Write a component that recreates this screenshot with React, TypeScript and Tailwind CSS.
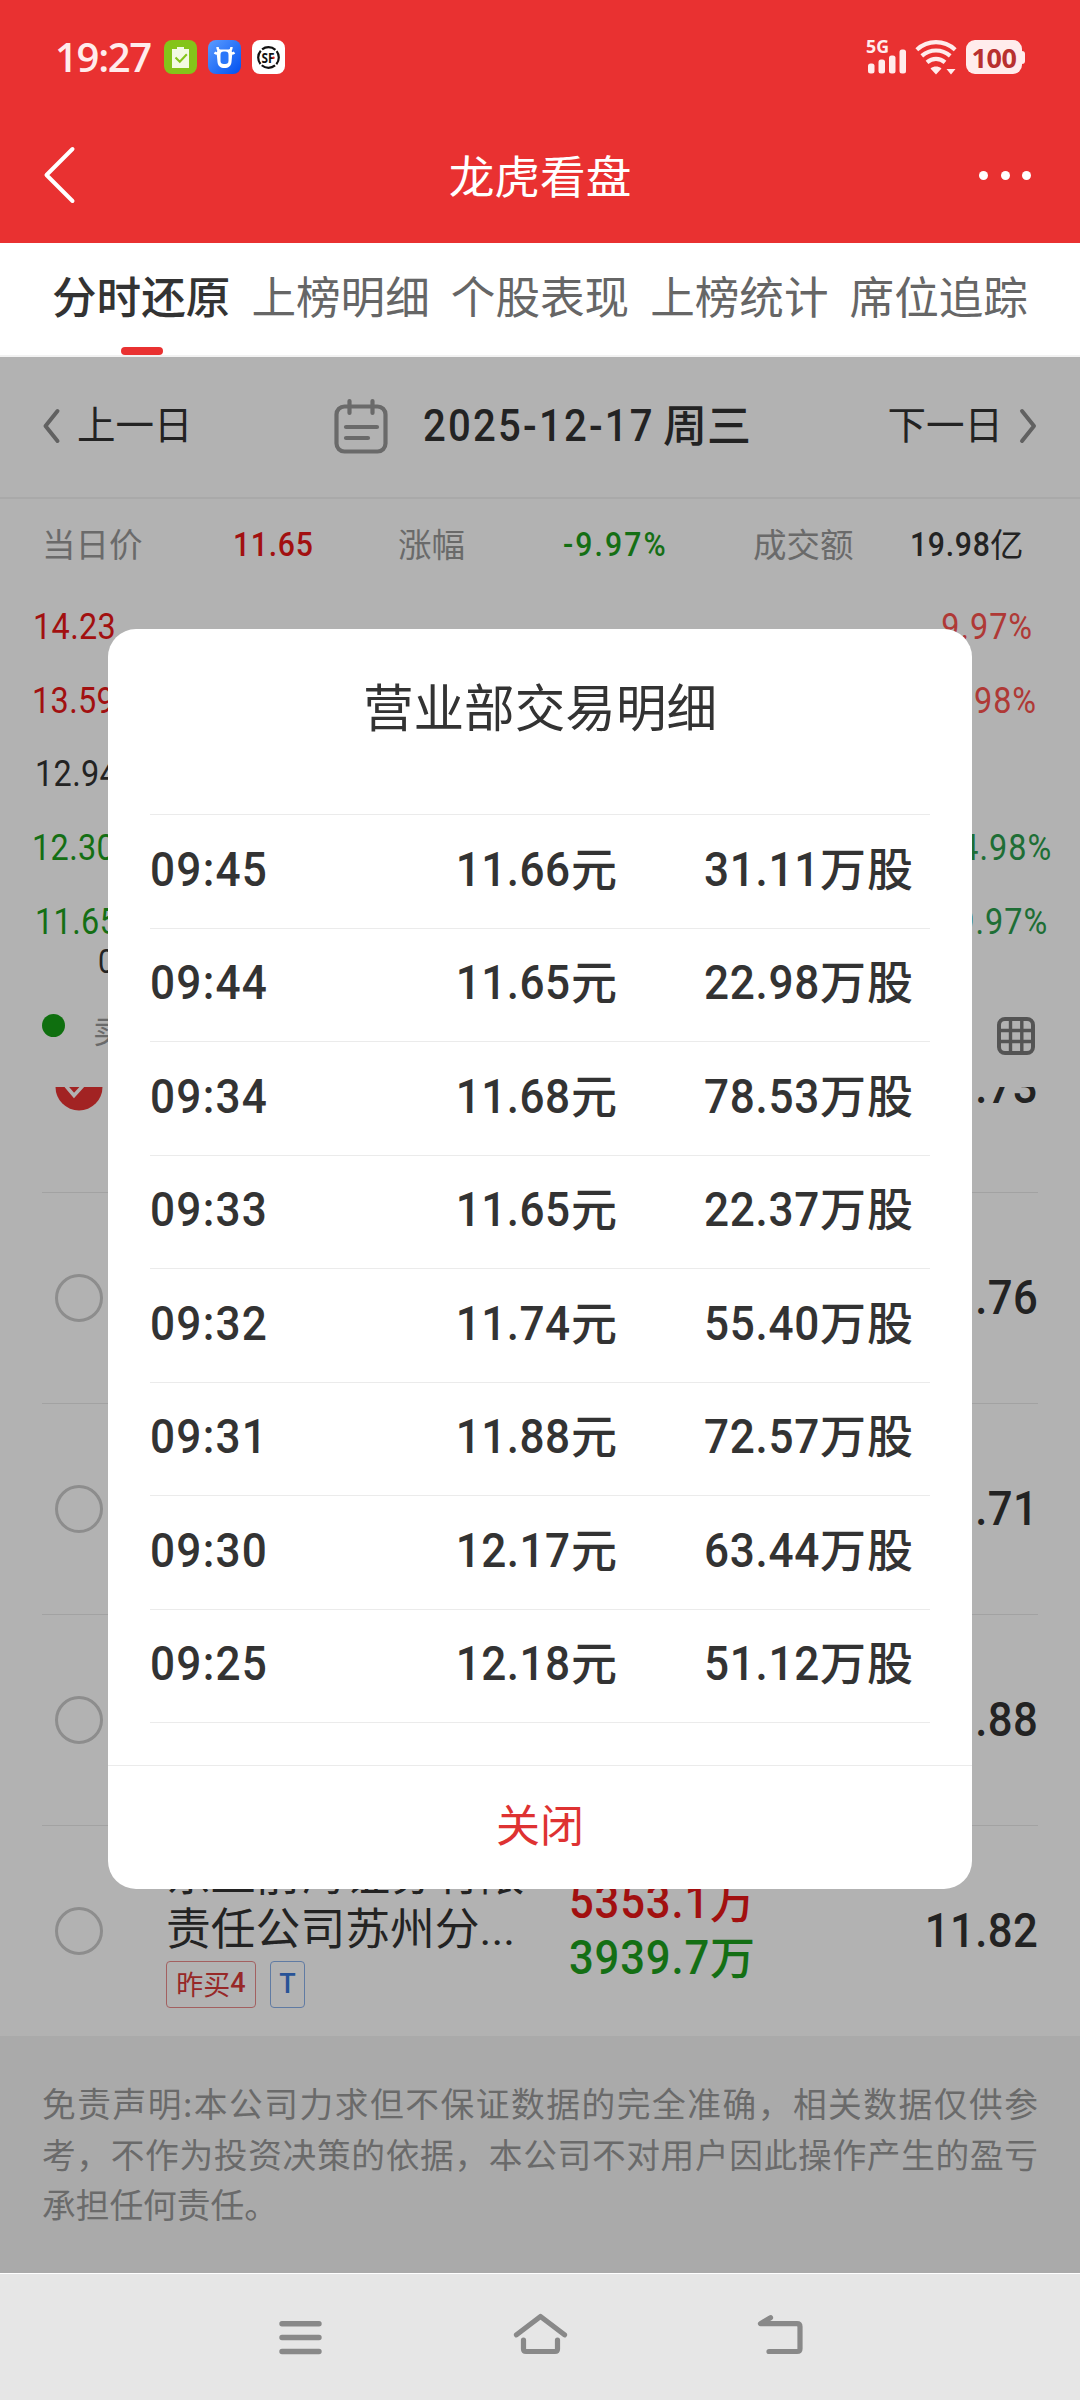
import React from "react";

interface Trade {
  time: string;
  price: string;
  volume: string;
}

interface AxisLabel {
  price: string;
  percent: string;
  left: string;
  right: string;
}

const tabs = ["分时还原", "上榜明细", "个股表现", "上榜统计", "席位追踪"];

const axis: AxisLabel[] = [
  { price: "14.23", percent: "9.97%", left: "pl-[33px] text-[#e81818]", right: "pr-[47px] text-[#fb524e]" },
  { price: "13.59", percent: "4.98%", left: "pl-[32px] text-[#e81818]", right: "pr-[43px] text-[#fb524e]" },
  { price: "12.94", percent: "", left: "pl-[35px] text-[#333]", right: "pr-[44px]" },
  { price: "12.30", percent: "-4.98%", left: "pl-[32px] text-[#1ea01e]", right: "pr-[28px] text-[#2c9e4c]" },
  { price: "11.65", percent: "-9.97%", left: "pl-[35px] text-[#1ea01e]", right: "pr-[32px] text-[#2c9e4c]" },
];

const trades: Trade[] = [
  { time: "09:45", price: "11.66", volume: "31.11" },
  { time: "09:44", price: "11.65", volume: "22.98" },
  { time: "09:34", price: "11.68", volume: "78.53" },
  { time: "09:33", price: "11.65", volume: "22.37" },
  { time: "09:32", price: "11.74", volume: "55.40" },
  { time: "09:31", price: "11.88", volume: "72.57" },
  { time: "09:30", price: "12.17", volume: "63.44" },
  { time: "09:25", price: "12.18", volume: "51.12" },
];

const seatPrices = ["11.73", "11.76", "11.71", "11.88"];

// narrow figures, squeezed towards the side they are aligned to
function Num({
  children,
  align = "left",
  className = "",
}: {
  children: React.ReactNode;
  align?: "left" | "right";
  className?: string;
}) {
  return (
    <span
      className={`inline-block scale-x-90 whitespace-nowrap font-['Roboto'] ${
        align === "right" ? "origin-right" : "origin-left"
      } ${className}`}
    >
      {children}
    </span>
  );
}

function StatusBar() {
  return (
    <div className="flex h-[114px] items-center pl-[55px] pr-[55px] text-[#ffecec]">
      <span className="w-[109px] font-['Open_Sans'] text-[40px] leading-none font-semibold tracking-[-1.300px]">19:27</span>
      <svg className="h-[34px] w-[33px]" viewBox="0 0 33 34">
        <rect width="33" height="34" rx="8" fill="#84c41a" />
        <path d="M8 9h5V7h7v2h5v19H8z" fill="#f3fae4" />
        <path d="M11.5 17.5l4.300 4.300 7-7.600" fill="none" stroke="#84c41a" strokeWidth="2" />
      </svg>
      <svg className="ml-[11px] h-[34px] w-[33px]" viewBox="0 0 33 34">
        <defs>
          <linearGradient id="ox" x1="0" y1="0" x2="1" y2="1">
            <stop offset="0" stopColor="#5b9cff" />
            <stop offset="1" stopColor="#0050f0" />
          </linearGradient>
        </defs>
        <rect width="33" height="34" rx="8" fill="url(#ox)" />
        <path d="M6.500 12.500c2 1.500 4 1.200 6-.5M26.500 12.500c-2 1.500-4 1.200-6-.5M9.500 7c0 2.500 1 4 3 4.500M23.500 7c0 2.500-1 4-3 4.500" fill="none" stroke="#fff" strokeWidth="2.400" />
        <path d="M12 9.500h9c2.500 0 3.500 2 3.200 5L23.500 22c-.5 4-3 6-7 6s-6.500-2-7-6l-.700-7.500c-.3-3 .7-5 3.200-5z" fill="#fff" />
        <rect x="12.500" y="11.500" width="8" height="12.500" rx="3.200" fill="#2b77fa" />
      </svg>
      <svg className="ml-[11px] h-[34px] w-[33px]" viewBox="0 0 33 34">
        <rect width="33" height="34" rx="8" fill="#fff" />
        <circle cx="16.500" cy="17.500" r="10.300" fill="none" stroke="#111" strokeWidth="2.200" strokeDasharray="14.400 1.780" strokeDashoffset="-9" />
        <text x="9.600" y="22.800" fontFamily="Open Sans" fontSize="14.500" fontWeight="700" fill="#111" textLength="13" lengthAdjust="spacingAndGlyphs">SF</text>
        <circle cx="21.500" cy="17.800" r="1.200" fill="#e02020" />
      </svg>

      <svg className="ml-auto h-[38px] w-[42px]" viewBox="0 0 42 38">
        <text x="0" y="14.500" fontFamily="Open Sans" fontSize="18" fontWeight="700" fill="#ffecec" textLength="23" lengthAdjust="spacingAndGlyphs">5G</text>
        <g fill="#ffecec">
          <rect x="2" y="25.500" width="6.500" height="10" rx="2.500" />
          <rect x="12.500" y="21.500" width="6.500" height="14" rx="2.500" />
          <rect x="23" y="17.500" width="6.500" height="18" rx="2.500" />
          <rect x="33.500" y="11.500" width="6.500" height="24" rx="2.500" />
        </g>
      </svg>
      <svg className="ml-[7px] h-[36px] w-[44px]" viewBox="0 0 44 36">
        <g fill="none" stroke="#ffecec" strokeWidth="4.200">
          <path d="M1.800 10.700C13 .7 29 .7 40.200 10.700" />
          <path d="M6.800 16.900c8.400-7.200 20-7.200 28.400 0" />
          <path d="M12 23.300c5.400-4.600 12.600-4.600 18 0" />
        </g>
        <path d="M15.500 29.500c3.500-2.600 7.500-2.600 11 0L21 35.500zM31.500 30h9L36 35.500z" fill="#ffecec" />
      </svg>
      <div className="ml-[7px] flex items-center">
        <div className="flex h-[34px] w-[56px] items-center justify-center rounded-[9px] bg-[#ffecec]">
          <span className="font-['Open_Sans'] text-[27px] leading-none font-bold tracking-[-0.500px] text-[#b8302f]">100</span>
        </div>
        <div className="h-[13px] w-[3px] rounded-r-[3px] bg-[#ffecec]" />
      </div>
    </div>
  );
}

function Header() {
  return (
    <header className="h-[243px] bg-[#e93131]">
      <StatusBar />
      <div className="flex h-[123px] items-center justify-between px-[42px] text-white">
        <svg className="h-[60px] w-[60px]" viewBox="0 0 60 60" fill="none" stroke="#fff" strokeWidth="4" strokeLinecap="round" strokeLinejoin="round">
          <path d="M30.500 3L4.500 29l26 26" />
        </svg>
        <h1 className="-mt-[2px] text-[45.700px] leading-none">龙虎看盘</h1>
        <div className="flex w-[60px] justify-end gap-[12.500px] pr-[7px]">
          {[0, 1, 2].map((dot) => (
            <span key={dot} className="size-[9px] shrink-0 rounded-full bg-white" />
          ))}
        </div>
      </div>
    </header>
  );
}

function TabBar() {
  return (
    <nav className="flex h-[114px] justify-between border-b-2 border-[#f2f2f2] bg-white px-[52px]">
      {tabs.map((tab, i) => (
        <div
          key={tab}
          className={`relative flex h-full items-center text-[44.600px] leading-none ${
            i === 0 ? "font-medium text-[#333]" : "text-[#666]"
          }`}
        >
          <span className="-mt-[8px]">{tab}</span>
          {i === 0 && <span className="absolute bottom-0 left-[69px] h-[8px] w-[42px] rounded-[4px] bg-[#e93131]" />}
        </div>
      ))}
    </nav>
  );
}

function DateBar() {
  return (
    <div className="flex h-[142px] items-center border-b-2 border-[#f2f2f2] px-[42px] pb-[3px] text-[38.500px] leading-none text-[#333]">
      <svg className="h-[36px] w-[20px]" viewBox="0 0 20 36" fill="none" stroke="#8c8c8c" strokeWidth="4" strokeLinecap="round" strokeLinejoin="round">
        <path d="M15.500 3L3.500 18l12 15" />
      </svg>
      <span className="-mt-[6px] ml-[15px] w-[256px]">上一日</span>
      <svg className="h-[56px] w-[56px]" viewBox="0 0 56 56" fill="none" stroke="#999" strokeWidth="4.200" strokeLinecap="round">
        <rect x="3.500" y="8.500" width="49" height="45" rx="8" />
        <path d="M16.500 3v12M39.500 3v12M13 29h31M13 40h22" />
      </svg>
      <div className="ml-[34px] flex items-center">
        <Num className="mt-[1px] w-[240px] text-[44.500px] font-medium tracking-[2.500px]">2025-12-17</Num>
        <span className="-mt-[5px] text-[44px] font-medium">周三</span>
      </div>
      <span className="-mt-[6px] ml-auto">下一日</span>
      <svg className="ml-[15px] h-[36px] w-[20px]" viewBox="0 0 20 36" fill="none" stroke="#8c8c8c" strokeWidth="4" strokeLinecap="round" strokeLinejoin="round">
        <path d="M4 3l12 15L4 33" />
      </svg>
    </div>
  );
}

function Stats() {
  return (
    <div className="flex h-[90px] items-center pl-[42px] text-[33.500px] leading-none text-[#999]">
      <span className="-mt-[2px] w-[191px]">当日价</span>
      <Num className="mt-[1px] w-[165px] font-medium tracking-[0.800px] text-[#e81818]">11.65</Num>
      <span className="-mt-[2px] w-[165px]">涨幅</span>
      <Num className="mt-[1px] w-[190px] font-medium tracking-[2.300px] text-[#1ea01e]">-9.97%</Num>
      <span className="-mt-[2px] w-[157px]">成交额</span>
      <Num className="mt-[1px] w-[80px] font-medium tracking-[0.800px] text-[#333]">19.98</Num>
      <span className="-mt-[2px] text-[#333]">亿</span>
    </div>
  );
}

function Chart() {
  return (
    <div className="h-[498px] pt-[1px] leading-none">
      {axis.map((label) => (
        <div key={label.price} className="flex h-[73.800px] items-center justify-between">
          <div className={label.left}>
            <Num className="text-[36px] tracking-[0.400px]">{label.price}</Num>
          </div>
          <div className={label.right}>
            <Num align="right" className="text-[36px] tracking-[1.100px]">{label.percent}</Num>
          </div>
        </div>
      ))}
      <div className="flex h-[6px] items-center pl-[98px] text-[33px] text-[#333]">
        <Num>09:30</Num>
      </div>
      <div className="flex h-[121px] items-center pl-[42px] pr-[44px]">
        <span className="size-[23px] rounded-full bg-[#16a016]" />
        <span className="ml-[28px] mt-[9px] text-[33px] text-[#999]">卖出</span>
        <svg className="mt-[22px] ml-auto size-[40px]" viewBox="0 0 40 40" fill="none" stroke="#797979" strokeWidth="4">
          <rect x="3" y="3" width="34" height="34" rx="6" />
          <path d="M14.500 3v34M25.800 3v34M3 14.500h34M3 25.500h34" strokeWidth="3.400" />
        </svg>
      </div>
    </div>
  );
}

function SeatRow({ price, checked, children }: { price: string; checked?: boolean; children?: React.ReactNode }) {
  return (
    <div className="mx-[42px] flex h-[211px] items-center border-b border-[#e8e8e8] leading-none">
      <div className="w-[124px] pl-[13px]">
        {checked ? (
          <svg className="size-[48px]" viewBox="0 0 48 48">
            <circle cx="24" cy="24" r="23.500" fill="#e83333" />
            <path d="M11 23l8 9.500L35 15" fill="none" stroke="#fff" strokeWidth="3.500" />
          </svg>
        ) : (
          <div className="size-[48px] rounded-full border-[3.500px] border-[#cacaca]" />
        )}
      </div>
      {children}
      <Num align="right" className="ml-auto text-[48.500px] font-medium tracking-[0.500px] text-[#333]">
        {price}
      </Num>
    </div>
  );
}

function SeatList() {
  return (
    <div className="h-[949px] overflow-hidden">
      <div className="-mt-[105px]">
        {seatPrices.map((price, i) => (
          <SeatRow key={price} price={price} checked={i === 0} />
        ))}
        <SeatRow price="11.82">
          <div className="-mt-[10px] w-[403px] text-[#333]">
            <p className="text-[44.800px] leading-[54px]">
              东亚前海证券有限
              <br />
              责任公司苏州分<span className="font-['Roboto']">...</span>
            </p>
            <div className="mt-[4px] flex gap-[14px] text-[27px] leading-none">
              <span className="flex h-[47px] w-[90px] items-center justify-center rounded-[4px] border border-[#ea8a8a] pb-[2px] text-[#d93a3a]">
                昨买<span className="font-['Roboto'] font-medium">4</span>
              </span>
              <span className="flex h-[47px] w-[35px] items-center justify-center rounded-[4px] border border-[#8ab0ea] font-['Roboto'] font-medium text-[#3a78d9]">
                T
              </span>
            </div>
          </div>
          <div className="-mt-[3px] text-[45px] leading-[56px] font-medium">
            <p className="flex items-center text-[#e81818]">
              <Num className="w-[141px] text-[48.500px] tracking-[0.900px]">5353.1</Num>
              <span className="-mt-[4px]">万</span>
            </p>
            <p className="flex items-center text-[#1ea01e]">
              <Num className="w-[141px] text-[48.500px] tracking-[0.900px]">3939.7</Num>
              <span className="-mt-[4px]">万</span>
            </p>
          </div>
        </SeatRow>
      </div>
    </div>
  );
}

function TradeModal() {
  return (
    <div className="absolute top-[272px] left-[108px] flex h-[1260px] w-[864px] flex-col rounded-[28px] bg-white text-[#333]">
      <h2 className="flex h-[185px] items-center justify-center pb-[32px] text-[50.600px] leading-none">营业部交易明细</h2>
      <div className="mx-[42px] h-[951px] border-t border-[#ebebeb]">
        {trades.map((trade) => (
          <div
            key={trade.time}
            className="flex h-[113.500px] items-center border-b border-[#ebebeb] pr-[16px] pb-[4px] text-[46px] leading-none font-medium"
          >
            <Num className="w-[200px] text-[49px] tracking-[1.400px]">{trade.time}</Num>
            <div className="flex w-[267px] items-center justify-end">
              <Num align="right" className="text-[49px] tracking-[0.500px]">{trade.price}</Num>
              <span className="-mt-[7px]">元</span>
            </div>
            <div className="ml-auto flex items-center">
              <Num align="right" className="text-[49px] tracking-[0.800px]">{trade.volume}</Num>
              <span className="-mt-[7px] tracking-[1px]">万股</span>
            </div>
          </div>
        ))}
      </div>
      <button className="flex flex-1 items-center justify-center border-t border-[#ebebeb] pb-[9px] text-[44px] leading-none text-[#de3232]">
        关闭
      </button>
    </div>
  );
}

function SystemNav() {
  return (
    <div className="h-[127px] border-t border-white bg-[#e6e6e6]">
      <div className="flex h-full items-center justify-between px-[272px] pb-[4px]">
        <svg className="h-[60px] w-[56px]" viewBox="272 2305 56 60" fill="none" stroke="#898989" strokeWidth="5.400" strokeLinecap="round">
          <path d="M282 2323.700h37M282 2337.500h37M282 2351.500h37" />
        </svg>
        <svg className="h-[60px] w-[60px]" viewBox="510 2305 60 60" fill="none" stroke="#898989" strokeWidth="5.200" strokeLinecap="round" strokeLinejoin="round">
          <path d="M516.500 2334.800l24-18.300 24 18.300M523.500 2340v9q0 2.500 2.500 2.500h29q2.500 0 2.500-2.500v-9" />
        </svg>
        <svg className="h-[60px] w-[56px]" viewBox="752 2305 56 60" fill="none" stroke="#898989" strokeWidth="5.200" strokeLinecap="round" strokeLinejoin="round">
          <path d="M770.500 2317.700l-10 6H797q3 0 3 3v22q0 2.800-3 2.800h-28" />
        </svg>
      </div>
    </div>
  );
}

export default function App(): React.JSX.Element {
  return (
    <div className="h-[2400px] w-[1080px] overflow-hidden bg-white font-['Noto_Sans_CJK_SC',sans-serif]">
      <Header />
      <TabBar />
      <main className="relative h-[1916px]">
        <DateBar />
        <Stats />
        <Chart />
        <SeatList />
        <p className="h-[237px] bg-[#f4f4f4] px-[42px] pt-[42px] text-justify text-[33.700px] leading-[50.500px] text-[#999]">
          免责声明:本公司力求但不保证数据的完全准确，相关数据仅供参考，不作为投资决策的依据，本公司不对用户因此操作产生的盈亏承担任何责任。
        </p>
        <div className="absolute inset-0 bg-black/30" />
        <TradeModal />
      </main>
      <SystemNav />
    </div>
  );
}
